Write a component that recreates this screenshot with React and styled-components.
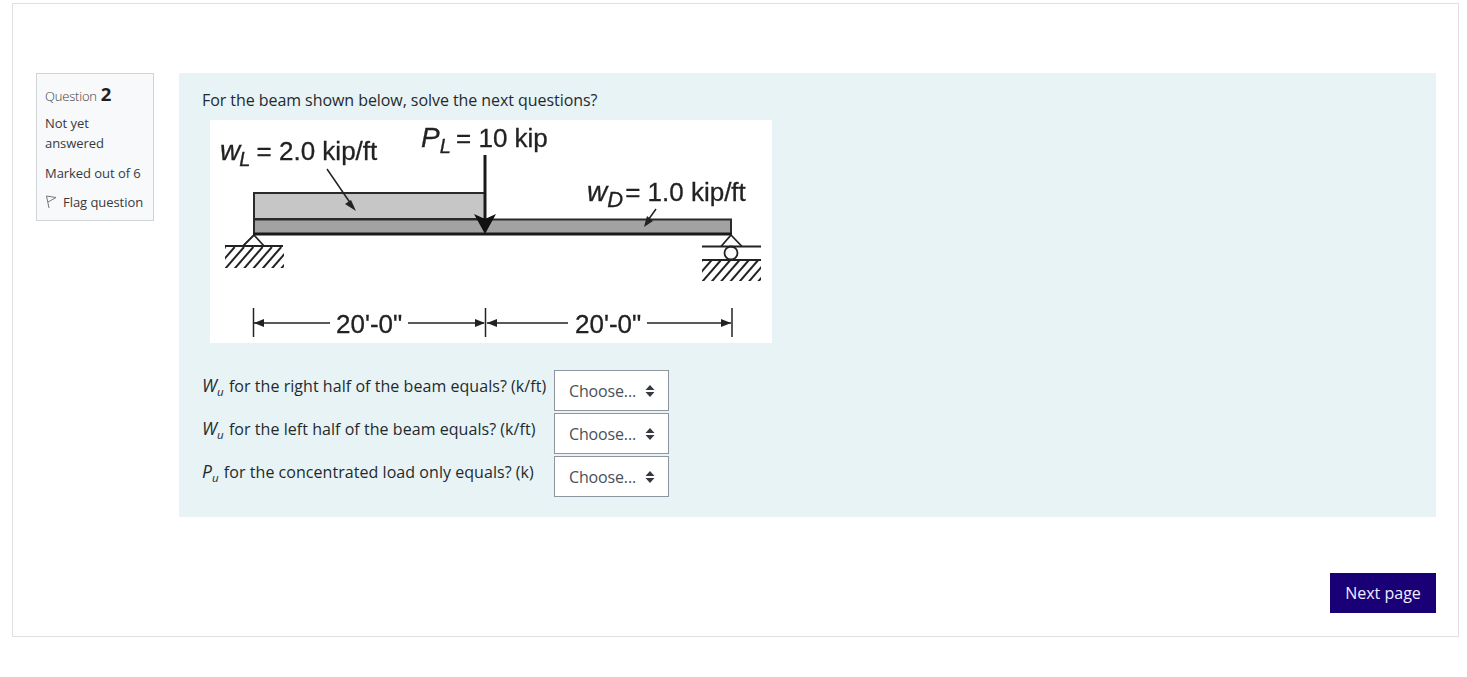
import React from 'react';
import styled, { createGlobalStyle } from 'styled-components';

const arrows = "data:image/svg+xml,%3Csvg xmlns='http://www.w3.org/2000/svg' width='10' height='14' viewBox='0 0 10 14'%3E%3Cpath fill='%23343a40' d='M5 1l4.500 5H.5zM5 13L.5 8h9z'/%3E%3C/svg%3E";

const Global = createGlobalStyle`
  body {
    margin: 0;
    background: #fff;
    font-family: "Open Sans", "Noto Sans", sans-serif;
    color: #1d2125;
  }
`;

const Card = styled.div`
  box-sizing: border-box;
  width: 1447px;
  height: 634px;
  margin: 3px 0 0 12px;
  padding: 69px 22px 0 23px;
  border: 1px solid #e0e0e0;
`;

const Attempt = styled.div`
  display: flex;
  align-items: flex-start;
  gap: 25px;
`;

const Info = styled.div`
  box-sizing: border-box;
  width: 118px;
  height: 148px;
  flex: none;
  padding: 10px 8px 0;
  background: #f8f9fa;
  border: 1px solid #cfd4d6;
  font-size: 13px;
  line-height: 20px;
  letter-spacing: -0.05px;
  color: #373a3c;
`;

const QNo = styled.div`
  display: flex;
  align-items: baseline;
  gap: 4px;
  font-weight: 300;
  height: 22px;
  letter-spacing: -0.2px;

  b {
    font-size: 18.5px;
    font-weight: 700;
    color: #1d2125;
  }
`;

const InfoLine = styled.div`
  margin-top: ${p => p.$top || 0}px;
`;

const FlagRow = styled.div`
  display: flex;
  align-items: center;
  gap: 6px;
  margin-top: 9px;
`;

const Content = styled.div`
  box-sizing: border-box;
  width: 1257px;
  height: 444px;
  padding: 15px 23px 0;
  background: #e7f3f5;
`;

const Prompt = styled.div`
  font-size: 16px;
  line-height: 24px;
  letter-spacing: -0.06px;
  color: #1f2a2e;
`;

const Figure = styled.svg`
  display: block;
  width: 562px;
  height: 223px;
  margin: 8px 0 27px 8px;
  background: #fff;
  font-family: "Liberation Sans", Arial, sans-serif;
  filter: blur(0.4px);
`;

const Answers = styled.div`
  display: grid;
  grid-template-columns: 352px 115px;
  row-gap: 2px;
`;

const Label = styled.div`
  font-size: 16px;
  line-height: 33px;
  letter-spacing: 0.05px;
  color: #1f2a2e;
  white-space: nowrap;

  i {
    font-size: 17.5px;
    line-height: 0;
  }

  sub {
    font-size: 11.5px;
    line-height: 0;
    font-style: italic;
    margin-right: 1px;
  }
`;

const Choice = styled.select`
  box-sizing: border-box;
  width: 115px;
  height: 41px;
  padding: 0 20px 0 14px;
  appearance: none;
  border: 1px solid #8f959e;
  border-radius: 0;
  background: #fff url("${arrows}") no-repeat right 13px center;
  font-family: "Open Sans", sans-serif;
  font-size: 16px;
  letter-spacing: -0.15px;
  color: #495057;
`;

const Footer = styled.div`
  display: flex;
  justify-content: flex-end;
  margin-top: 56px;
`;

const NextButton = styled.button`
  width: 106px;
  height: 40px;
  border: 0;
  background: #1a0076;
  color: #f1ecff;
  font-family: "Open Sans", sans-serif;
  font-size: 16px;
`;

function Flag() {
  return (
    <svg width="12" height="14" viewBox="0 0 12 14" fill="none" stroke="#777" strokeWidth="1">
      <path d="M1.500 1L4 13M1.500 1L11 2.500L3 7" />
    </svg>
  );
}

function Hatch({ id, x, y }) {
  let lines = [];
  for (let i = -2; i < 7; i++) {
    let left = x + i * 9.3;
    lines.push(<line key={i} x1={left} y1={y + 22} x2={left + 19} y2={y} />);
  }
  return (
    <>
      <clipPath id={id}>
        <rect x={x} y={y} width="59" height="21" />
      </clipPath>
      <g stroke="#222" strokeWidth="2" clipPath={`url(#${id})`}>{lines}</g>
    </>
  );
}

function Beam() {
  return (
    <Figure viewBox="0 0 562 223">
      <rect x="44" y="73" width="231" height="26" fill="#c6c6c6" stroke="#2a2a2a" strokeWidth="2" />
      <rect x="44" y="99.500" width="477" height="14.500" fill="#a2a2a2" stroke="#2a2a2a" strokeWidth="2" />
      <line x1="43" y1="114" x2="522" y2="114" stroke="#1a1a1a" strokeWidth="3" />

      {/* concentrated load */}
      <line x1="275" y1="35" x2="275" y2="100" stroke="#1a1a1a" strokeWidth="3" />
      <path d="M264 94L275 99L286 94L275 114Z" fill="#111" />

      {/* leaders */}
      <g stroke="#222" strokeWidth="1.500">
        <line x1="117" y1="49" x2="143" y2="87" />
        <line x1="446" y1="89" x2="436" y2="103" />
      </g>
      <path d="M146 91L135 84L141 80Z" fill="#222" />
      <path d="M434 107L437 96L443 101Z" fill="#222" />

      {/* left support */}
      <g fill="none" stroke="#222" strokeWidth="1.800">
        <path d="M44 115L33 126M44 115L54 126" />
        <line x1="15" y1="126" x2="73" y2="126" />
      </g>
      <Hatch id="hatch-left" x={15} y={127} />

      {/* right support */}
      <g fill="none" stroke="#222" strokeWidth="1.800">
        <path d="M521 115L511 126.500M521 115L532 126.500" />
        <line x1="492" y1="126.500" x2="551" y2="126.500" />
        <circle cx="521" cy="133" r="6.500" />
        <line x1="492" y1="140" x2="551" y2="140" />
      </g>
      <Hatch id="hatch-right" x={492} y={140} />

      {/* dimensions */}
      <g stroke="#222" strokeWidth="1.500">
        <line x1="43.500" y1="188" x2="43.500" y2="217" />
        <line x1="275.500" y1="188" x2="275.500" y2="217" />
        <line x1="522" y1="188" x2="522" y2="217" />
        <line x1="44" y1="203" x2="120" y2="203" />
        <line x1="198" y1="203" x2="274" y2="203" />
        <line x1="277" y1="203" x2="358" y2="203" />
        <line x1="437" y1="203" x2="521" y2="203" />
      </g>
      <path d="M44 203L54 199L54 207Z M275 203L265 199L265 207Z M277 203L287 199L287 207Z M521 203L511 199L511 207Z" fill="#222" />

      <g fill="#222" stroke="#222" strokeWidth="0.300" fontSize="26">
        <text x="10" y="40">
          <tspan fontStyle="italic" fontSize="28">w</tspan>
          <tspan fontStyle="italic" fontSize="20" dy="6" dx="-1">L</tspan>
          <tspan dy="-6" dx="-1"> = 2.0 kip/ft</tspan>
        </text>
        <text x="211" y="26.500">
          <tspan fontStyle="italic" fontSize="28">P</tspan>
          <tspan fontStyle="italic" fontSize="20" dy="6">L</tspan>
          <tspan dy="-6" dx="-2"> = 10 kip</tspan>
        </text>
        <text x="377" y="81">
          <tspan fontStyle="italic" fontSize="28">w</tspan>
          <tspan fontStyle="italic" fontSize="22" dy="6">D</tspan>
          <tspan dy="-6" dx="2">= 1.0 kip/ft</tspan>
        </text>
        <text x="126" y="213">20'-0"</text>
        <text x="365" y="213">20'-0"</text>
      </g>
    </Figure>
  );
}

const rows = [
  ['W', ' for the right half of the beam equals? (k/ft)'],
  ['W', ' for the left half of the beam equals? (k/ft)'],
  ['P', ' for the concentrated load only equals? (k)'],
];

export default function App() {
  return (
    <>
      <Global />
      <Card>
        <Attempt>
          <Info>
            <QNo>Question <b>2</b></QNo>
            <InfoLine $top={7}>Not yet<br />answered</InfoLine>
            <InfoLine $top={10}>Marked out of 6</InfoLine>
            <FlagRow><Flag />Flag question</FlagRow>
          </Info>
          <Content>
            <Prompt>For the beam shown below, solve the next questions?</Prompt>
            <Beam />
            <Answers>
              {rows.map((r, i) => (
                <React.Fragment key={i}>
                  <Label><i>{r[0]}</i><sub>u</sub>{r[1]}</Label>
                  <Choice defaultValue="">
                    <option value="">Choose...</option>
                  </Choice>
                </React.Fragment>
              ))}
            </Answers>
          </Content>
        </Attempt>
        <Footer>
          <NextButton>Next page</NextButton>
        </Footer>
      </Card>
    </>
  );
}
